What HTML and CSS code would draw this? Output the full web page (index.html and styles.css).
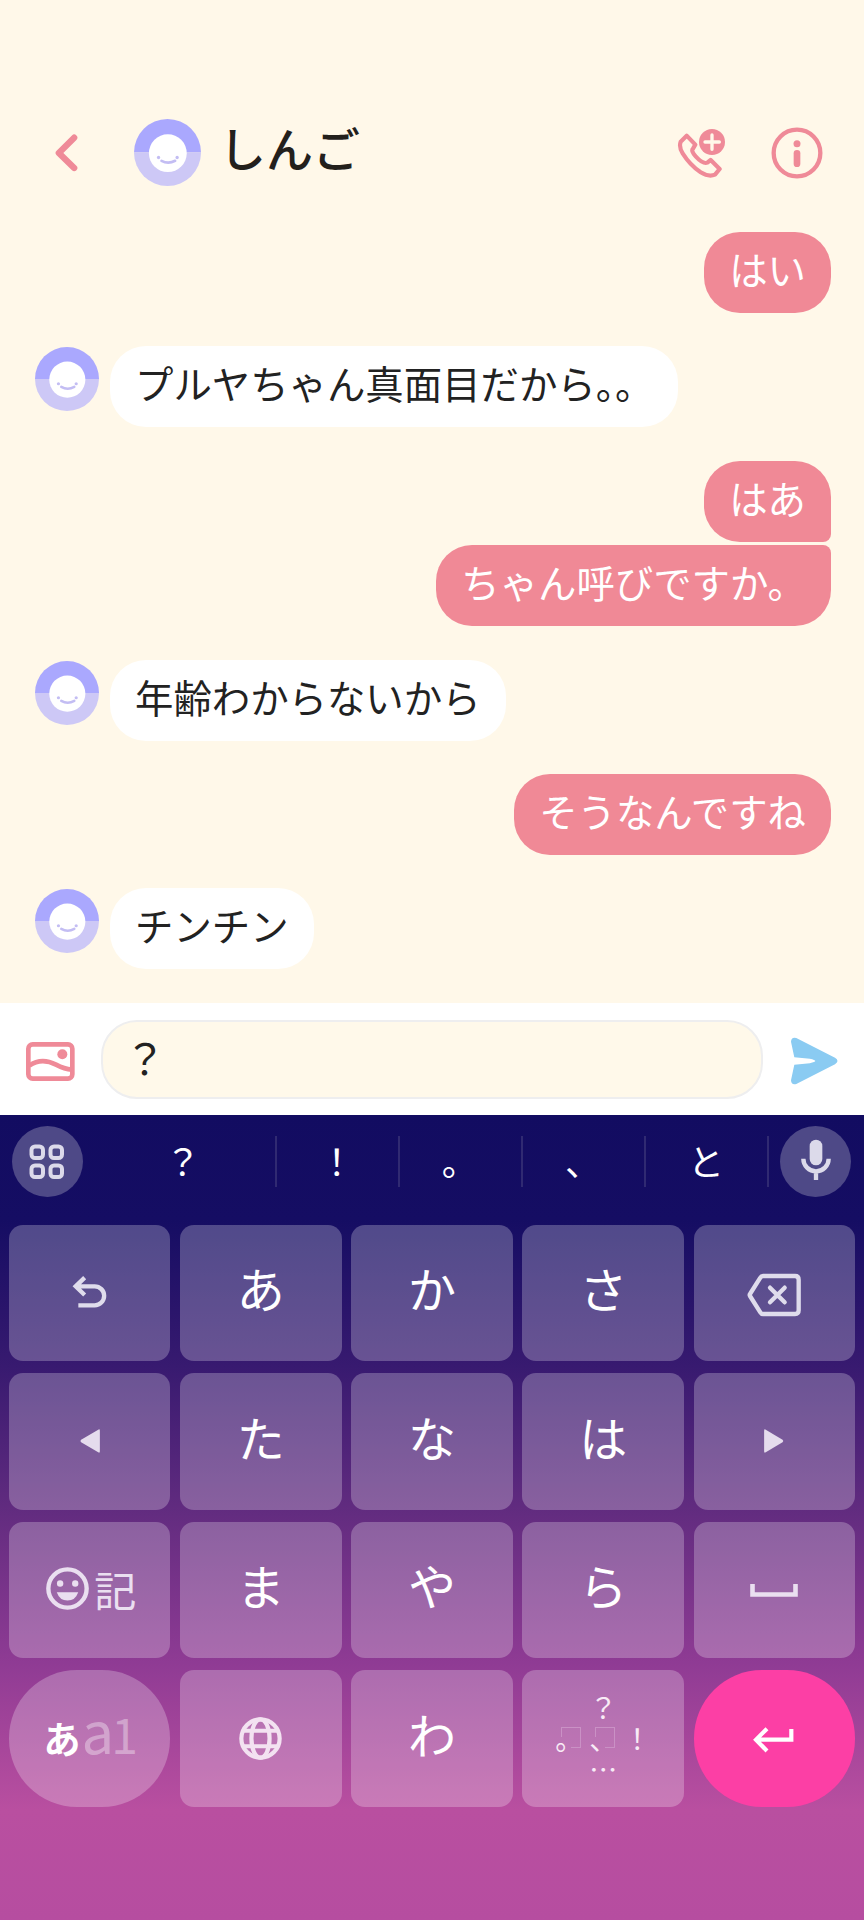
FILE: index.html
```html
<!DOCTYPE html>
<html lang="ja">
<head>
<meta charset="utf-8">
<title>しんご</title>
<link rel="stylesheet" href="styles.css">
</head>
<body>
<svg class="defs" width="0" height="0">
  <symbol id="avatar" viewBox="0 0 202 202">
    <path d="M0 101a101 101 0 0 1 202 0z" fill="#aaa8fe"/>
    <path d="M0 101a101 101 0 0 0 202 0z" fill="#cdc8f6"/>
    <circle cx="102" cy="103" r="57" fill="#fff"/>
    <circle cx="74" cy="116" r="5" fill="#c3bdf3"/>
    <circle cx="130" cy="116" r="5" fill="#c3bdf3"/>
    <path d="M83 126q20 11 41 0" fill="none" stroke="#c3bdf3" stroke-width="8" stroke-linecap="round"/>
  </symbol>
</svg>
<header class="header">
  <svg class="back" viewBox="160 130 80 120"><path d="M223 144L177 190L223 235" fill="none" stroke="#ef8a98" stroke-width="19" stroke-linecap="round" stroke-linejoin="round"/></svg>
  <svg class="head-avatar"><use href="#avatar"/></svg>
  <h1 class="name">しんご</h1>
  <svg class="call" viewBox="735 115 150 150">
    <path d="M764 138L746 156Q740 172 752 191Q773 225 806 248Q830 263 849 255L863 238L836 211L826 219Q813 224 791 200Q776 183 783 177L790 165Z" fill="none" stroke="#ef8a98" stroke-width="12.500" stroke-linejoin="round"/>
    <circle cx="840" cy="157" r="39" fill="#ef8a98"/>
    <path d="M840 136v43M819 157h43" stroke="#fff8e9" stroke-width="10" stroke-linecap="round"/>
  </svg>
  <svg class="info" viewBox="1017 111 156 156">
    <circle cx="1095" cy="189" r="70" fill="none" stroke="#ef8a98" stroke-width="13"/>
    <circle cx="1095" cy="161" r="10.500" fill="#ef8a98"/>
    <path d="M1095 190v31" stroke="#ef8a98" stroke-width="20" stroke-linecap="round"/>
  </svg>
</header>
<main class="chat">
  <div class="row mine"><div class="bubble">はい</div></div>
  <div class="row"><svg class="avatar"><use href="#avatar"/></svg><div class="bubble">プルヤちゃん真面目だから。。</div></div>
  <div class="row mine"><div class="bubble first">はあ</div></div>
  <div class="row mine joined"><div class="bubble last">ちゃん呼びですか。</div></div>
  <div class="row"><svg class="avatar"><use href="#avatar"/></svg><div class="bubble">年齢わからないから</div></div>
  <div class="row mine"><div class="bubble">そうなんですね</div></div>
  <div class="row"><svg class="avatar"><use href="#avatar"/></svg><div class="bubble">チンチン</div></div>
</main>
<div class="composer">
  <svg class="photo" viewBox="78 156 147 117">
    <rect x="85" y="163" width="132" height="103" rx="13" fill="none" stroke="#ef8a98" stroke-width="14"/>
    <path d="M88 227C115 208 143 211 168 224C185 233 198 238 215 239" fill="none" stroke="#ef8a98" stroke-width="14"/>
    <circle cx="187" cy="193" r="15" fill="#ef8a98"/>
  </svg>
  <div class="field">？</div>
  <svg class="send" viewBox="1078 143 142 143">
    <path d="M1094 145L1211 205Q1226 214 1211 224L1094 284Q1079 288 1078 273L1088 226L1135 221Q1168 215 1135 208L1088 203L1078 156Q1079 141 1094 145Z" fill="#8acbf2"/>
  </svg>
</div>
<section class="keyboard">
  <div class="suggest">
    <div class="round"><svg width="36" height="36" viewBox="0 0 36 36" fill="none" stroke="#dcdaea" stroke-width="4"><rect x="2.500" y="2.500" width="11.500" height="11.500" rx="3.500"/><rect x="21.500" y="2.500" width="11.500" height="11.500" rx="3.500"/><rect x="2.500" y="21.500" width="11.500" height="11.500" rx="3.500"/><rect x="21.500" y="21.500" width="11.500" height="11.500" rx="3.500"/></svg></div>
    <div class="word wide">？</div>
    <div class="word">！</div>
    <div class="word">。</div>
    <div class="word">、</div>
    <div class="word">と</div>
    <div class="round mic"><svg width="30" height="42" viewBox="1106 448 90 126"><rect x="1132" y="450" width="38" height="77" rx="19" fill="#dcdaea"/><path d="M1113 507a38 38 0 0 0 76 0M1151 545v26" fill="none" stroke="#dcdaea" stroke-width="13"/></svg></div>
  </div>
  <div class="keys">
    <div class="key undo"><svg width="36" height="34" viewBox="216 194 108 102" fill="none" stroke="#dfdcec" stroke-width="13"><path d="M254 202L227 228L254 254M228 228H284a28 28 0 0 1 0 57H235"/></svg></div>
    <div class="key">あ</div>
    <div class="key">か</div>
    <div class="key">さ</div>
    <div class="key back-key"><svg width="54" height="44" viewBox="944 189 162 132" fill="none" stroke="#dfdcec" stroke-width="13" stroke-linejoin="round"><path d="M992 198H1088Q1099 198 1099 209V301Q1099 312 1088 312H992Q987 312 984 307L953 258Q951 255 953 252L984 203Q987 198 992 198Z"/><path d="M1013 233L1057 277M1057 233L1013 277" stroke-linecap="round"/></svg></div>

    <div class="key"><svg width="20" height="24" viewBox="237 657 60 73"><path d="M292 659Q297 656 297 662V725Q297 731 292 728L240 697Q236 694 240 690Z" fill="#e5dced"/></svg></div>
    <div class="key">た</div>
    <div class="key">な</div>
    <div class="key">は</div>
    <div class="key"><svg width="20" height="24" viewBox="996 657 60 73"><path d="M1001 659Q996 656 996 662V725Q996 731 1001 728L1052 697Q1056 694 1052 690Z" fill="#e5dced"/></svg></div>

    <div class="key emoji"><svg width="43" height="43" viewBox="141 206 128 128"><circle cx="205" cy="270" r="57" fill="none" stroke="#eadff0" stroke-width="13"/><circle cx="183" cy="255" r="9.500" fill="#eadff0"/><circle cx="228" cy="255" r="9.500" fill="#eadff0"/><path d="M173 281H237Q228 306 205 306T173 281Z" fill="#eadff0"/></svg><span class="sign">記</span></div>
    <div class="key">ま</div>
    <div class="key">や</div>
    <div class="key">ら</div>
    <div class="key"><svg class="space" width="48" height="14" viewBox="0 0 48 14" fill="none" stroke="#eadff0" stroke-width="4.600"><path d="M2.500 0V10.500H45.500V0"/></svg></div>

    <div class="key pill mode"><b>あ</b><span class="latin">a</span><span class="digit">1</span></div>
    <div class="key"><svg width="43" height="43" viewBox="-64 -64 128 128" fill="none" stroke="#f3e2f1" stroke-width="12.500"><circle r="57"/><ellipse rx="27" ry="57"/><path d="M-54 -23H54M-54 23H54"/></svg></div>
    <div class="key">わ</div>
    <div class="key marks"><span class="up">？</span><span class="lf boxed">。</span><span class="md boxed">、</span><span class="rt">！</span><span class="dn">…</span></div>
    <div class="key pill enter"><svg width="42" height="26" viewBox="962 684 126 78" fill="none" stroke="#fff" stroke-width="12.500"><path d="M1004 689L971 722L1004 756M972 722H1077V690"/></svg></div>
  </div>
</section>
</body>
</html>
```
FILE: styles.css
```css
* { box-sizing: border-box; }
body {
  margin: 0;
  width: 864px;
  height: 1920px;
  overflow: hidden;
  display: flex;
  flex-direction: column;
  background: #fff8e9;
  color: #222;
  font-family: "Noto Sans CJK JP", sans-serif;
}
svg { display: block; flex: none; }
.defs { position: absolute; }

.header {
  height: 232px;
  padding: 118px 41px 44px 53px;
  display: flex;
  align-items: center;
}
.back { width: 27px; height: 40px; }
.head-avatar { width: 67px; height: 67px; margin: 0 0 1px 54px; }
.name {
  margin: 0 0 12px 18px;
  font-size: 47px;
  font-weight: 500;
  line-height: 68px;
  color: #23201c;
}
.call { width: 50px; height: 50px; margin-left: auto; }
.info { width: 52px; height: 52px; margin-left: 44px; }

.chat {
  height: 771px;
  padding: 0 33px 0 35px;
  display: flex;
  flex-direction: column;
  gap: 33.400px;
}
.row { display: flex; gap: 11px; }
.row.mine { justify-content: flex-end; }
.row.joined { margin-top: -29.900px; }
.avatar { width: 64px; height: 64px; margin-top: 1px; }
.bubble {
  height: 81px;
  padding: 0 25px;
  border-radius: 36px;
  background: #fff;
  font-size: 38.400px;
  line-height: 72px;
  white-space: nowrap;
}
.mine .bubble { background: #f08996; color: #fff; }
.mine .first { border-bottom-right-radius: 8px; }
.mine .last { border-top-right-radius: 8px; }

.composer {
  height: 112px;
  padding: 0 26px;
  display: flex;
  align-items: center;
  background: #fff;
}
.photo { width: 49px; height: 39px; margin-top: 4px; }
.field {
  width: 662px;
  height: 79px;
  margin: 0 auto 0 26px;
  padding: 0 21px;
  border: 2px solid #eeeeef;
  border-radius: 36px;
  background: #fff9ea;
  font-size: 42px;
  line-height: 69px;
}
.send { width: 47px; height: 48px; margin-top: 4px; }

.keyboard {
  height: 805px;
  color: #fff;
  background: linear-gradient(#120c61 0, #150d63 105px, #381a70 252px, #632c80 400px, #8f3b94 548px, #b94fa0 695px, #b64da0 100%);
}
.suggest {
  height: 110px;
  padding: 0 13px 17px 12px;
  display: flex;
  align-items: center;
}
.round {
  width: 71px;
  height: 71px;
  border-radius: 50%;
  background: #4e4987;
  display: flex;
  align-items: center;
  justify-content: center;
}
.mic { margin-left: 11px; }
.mic svg { margin-bottom: 3px; }
.word {
  width: 123.300px;
  height: 51px;
  padding-right: 1px;
  border-right: 2px solid #302a72;
  font-size: 36px;
  line-height: 49px;
  text-align: center;
}
.wide { width: 194px; padding-left: 9px; }

.keys {
  padding: 0 9px;
  display: grid;
  grid-template-columns: repeat(5, 1fr);
  grid-auto-rows: 136.300px;
  gap: 12.200px 9.800px;
}
.key {
  display: flex;
  align-items: center;
  justify-content: center;
  border-radius: 14px;
  background: rgba(255, 255, 255, .25);
  font-size: 48px;
  line-height: 60px;
  padding-bottom: 12px;
}
.key svg { margin-top: 11px; }
.key.undo svg { margin-top: 9px; }
.key.back-key svg { margin-top: 15px; }
.pill { border-radius: 68px; }
.key.emoji { gap: 5px; padding-bottom: 3px; padding-left: 3px; }
.key.emoji svg { margin-top: 0; }
.emoji { color: #eadff0; }
.sign { font-size: 42px; }
.key .space { margin-top: 14px; }
.key.mode { align-items: baseline; padding: 29px 0 0 2px; }
.mode b { font-size: 37px; }
.latin { font-size: 58px; opacity: .35; margin-left: 1px; }
.digit { font-size: 48px; opacity: .35; margin-left: -3px; }
.enter { background: #fc3fa5; }
.key.enter svg { margin-top: 15px; }
.key.marks {
  display: grid;
  grid-template: 31px 31px 31px / 34px 34px 34px;
  grid-template-areas: ". up ." "lf md rt" ". dn .";
  align-content: center;
  justify-content: center;
  justify-items: center;
  padding-bottom: 0;
  font-size: 28px;
  line-height: 31px;
  color: #f8ebf6;
}
.up { grid-area: up; }
.lf { grid-area: lf; }
.md { grid-area: md; }
.rt { grid-area: rt; }
.dn { grid-area: dn; }
.boxed {
  background:
    linear-gradient(#ca91c5, #ca91c5) 6px 4px / 20px 1px no-repeat,
    linear-gradient(#ca91c5, #ca91c5) 25px 4px / 1px 20px no-repeat,
    linear-gradient(#ca91c5, #ca91c5) 6px 4px / 1px 10px no-repeat,
    linear-gradient(#ca91c5, #ca91c5) 16px 24px / 10px 1px no-repeat;
}
```
